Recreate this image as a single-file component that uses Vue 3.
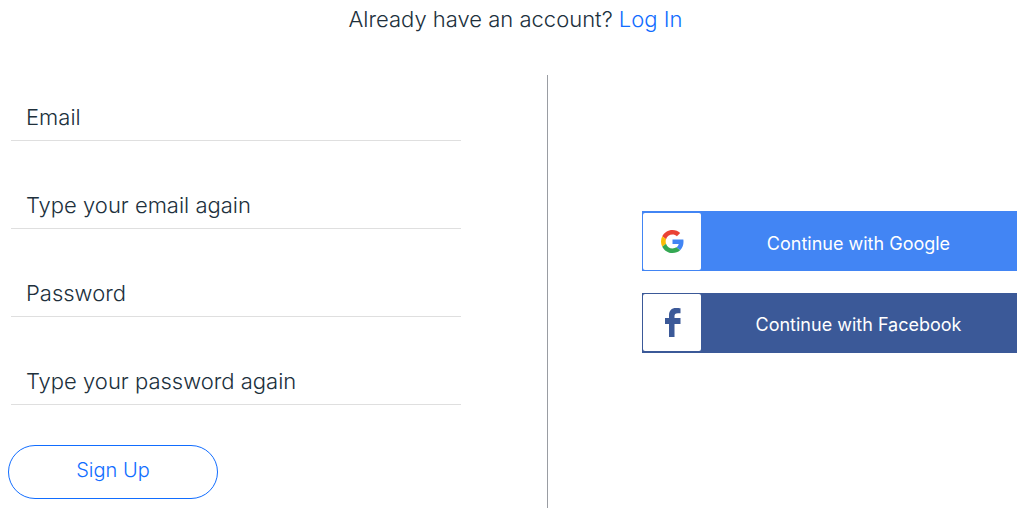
<template>
  <main class="signup">
    <p class="login-line">Already have an account? <a href="#">Log In</a></p>

    <div class="columns">
      <form class="signup-form" @submit.prevent>
        <div class="fields">
          <input
            v-for="field in fields"
            :id="field.id"
            :key="field.id"
            v-model="form[field.id]"
            class="field"
            :type="field.type"
            :placeholder="field.label"
            :aria-label="field.label"
          />
        </div>
        <button type="submit" class="submit">Sign Up</button>
      </form>

      <div class="social">
        <button type="button" class="social-button google">
          <span class="social-icon">
            <svg width="23" height="23" viewBox="0 0 48 48" aria-hidden="true">
              <path fill="#EA4335" d="M24 9.5c3.54 0 6.71 1.22 9.21 3.6l6.85-6.85C35.9 2.38 30.47 0 24 0 14.62 0 6.51 5.38 2.56 13.22l7.98 6.19C12.43 13.72 17.74 9.5 24 9.5z" />
              <path fill="#4285F4" d="M46.98 24.55c0-1.57-.15-3.09-.38-4.55H24v9.02h12.94c-.58 2.96-2.26 5.48-4.78 7.18l7.73 6c4.51-4.18 7.09-10.36 7.09-17.65z" />
              <path fill="#FBBC05" d="M10.53 28.59c-.48-1.45-.76-2.99-.76-4.59s.27-3.14.76-4.59l-7.98-6.19C.92 16.46 0 20.12 0 24c0 3.88.92 7.54 2.56 10.78l7.97-6.19z" />
              <path fill="#34A853" d="M24 48c6.48 0 11.93-2.13 15.89-5.81l-7.73-6c-2.15 1.45-4.92 2.3-8.16 2.3-6.26 0-11.57-4.22-13.47-9.91l-7.98 6.19C6.51 42.62 14.62 48 24 48z" />
            </svg>
          </span>
          <span class="social-text">Continue with Google</span>
        </button>
        <button type="button" class="social-button facebook">
          <span class="social-icon">
            <svg width="18" height="29" viewBox="0 0 18 29" aria-hidden="true">
              <path fill="#3B5998" d="M6 29V16H2v-6h4V7.500C6 2.500 8.500 0 13 0c1.800 0 3.500.1 4.500.3v5H15c-2.800 0-3.500 1.200-3.500 3V10h6v6h-6v13z" />
            </svg>
          </span>
          <span class="social-text">Continue with Facebook</span>
        </button>
      </div>
    </div>
  </main>
</template>

<script setup>
import { reactive } from 'vue'

const fields = [
  { id: 'email', type: 'email', label: 'Email' },
  { id: 'emailAgain', type: 'email', label: 'Type your email again' },
  { id: 'password', type: 'password', label: 'Password' },
  { id: 'passwordAgain', type: 'password', label: 'Type your password again' }
]

const form = reactive({ email: '', emailAgain: '', password: '', passwordAgain: '' })
</script>

<style>
body {
  margin: 0;
  background: #fff;
}
</style>

<style scoped>
.signup {
  padding: 4px 8px 7px;
  color: #20303c;
  font-family: 'Inter', sans-serif;
  font-weight: 300;
}

.login-line {
  margin: 0 0 41px;
  padding-left: 6px;
  font-size: 22px;
  line-height: 30px;
  text-align: center;
}

.login-line a {
  color: #116dff;
  text-decoration: none;
}

.columns {
  display: grid;
  grid-template-columns: 540fr 469fr;
}

.signup-form {
  padding: 17px 86px 9px 0;
  border-right: 1px solid #9a9da3;
}

.fields {
  display: flex;
  flex-direction: column;
  gap: 39px;
  margin: 0 0 40px 3px;
}

.field {
  box-sizing: border-box;
  width: 100%;
  height: 49px;
  padding: 2px 15px 0;
  border: 0;
  border-bottom: 1px solid #dfdfdf;
  outline: 0;
  background: transparent;
  color: #20303c;
  font: inherit;
  font-size: 22px;
}

.field::placeholder {
  color: #20303c;
  opacity: 1;
}

.submit {
  display: block;
  width: 210px;
  height: 54px;
  padding: 0 0 4px;
  border: 1px solid #116dff;
  border-radius: 27px;
  background: #fff;
  color: #116dff;
  font: inherit;
  font-size: 20px;
  cursor: pointer;
}

.social {
  display: flex;
  flex-direction: column;
  gap: 22px;
  padding: 136px 0 0 94px;
}

.social-button {
  display: flex;
  align-items: stretch;
  height: 60px;
  border: 0;
  color: #fff;
  font: inherit;
  font-size: 18px;
  font-weight: 400;
  cursor: pointer;
}

.google {
  padding: 2px 1px 1px;
  background: #4285f4;
}

.facebook {
  padding: 1px 1px 2px;
  background: #3b5998;
}

.social-icon {
  display: flex;
  flex: none;
  align-items: center;
  justify-content: center;
  width: 58px;
  border-radius: 2px;
  background: #fff;
}

.social-text {
  flex: 1;
  align-self: center;
  padding-top: 4px;
}
</style>
